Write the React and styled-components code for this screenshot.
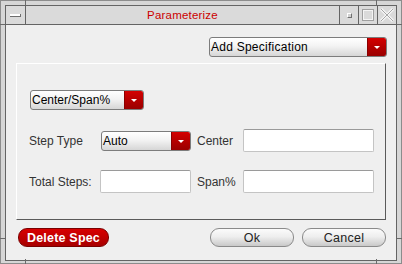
import React from "react";
import styled, { createGlobalStyle } from "styled-components";

const GlobalStyle = createGlobalStyle`
  html, body {
    margin: 0;
    padding: 0;
    background: #d6d6d6;
  }
  body {
    font-family: "Liberation Sans", Arial, sans-serif;
  }
`;

const Frame = styled.div`
  position: relative;
  box-sizing: border-box;
  width: 402px;
  height: 264px;
  border: 1px solid #8c8c8c;
  background: #d6d6d6;
  padding: 4px 4px 2px 4px;
  display: flex;
`;

const Tick = styled.div`
  position: absolute;
  background: #6a6a6a;
  width: ${(p) => (p.$h ? "5px" : "1px")};
  height: ${(p) => (p.$h ? "1px" : "5px")};
`;

const Inner = styled.div`
  flex: 1;
  display: flex;
  flex-direction: column;
  border: 1px solid #646464;
  background: #efefef;
`;

const TitleBar = styled.div`
  display: flex;
  height: 18px;
  border-bottom: 1px solid #646464;
  background: #dadada;
`;

const TitleButton = styled.div`
  display: flex;
  align-items: center;
  justify-content: center;
  border-left: ${(p) => (p.$left ? "none" : "1px solid #646464")};
  border-right: ${(p) => (p.$left ? "1px solid #646464" : "none")};
  width: ${(p) => (p.$left ? "19px" : "18px")};
`;

const MinBar = styled.div`
  width: 10px;
  height: 2px;
  background: #fff;
  border-right: 1px solid #6e6e6e;
  border-bottom: 1px solid #6e6e6e;
  margin-top: 1px;
`;

const Dot = styled.div`
  width: 3px;
  height: 3px;
  background: #d0d0d0;
  border-top: 1px solid #fff;
  border-left: 1px solid #fff;
  border-right: 1px solid #707070;
  border-bottom: 1px solid #707070;
`;

const Title = styled.div`
  flex: 1;
  text-align: center;
  color: #cc0000;
  font-size: 11.5px;
  line-height: 18px;
  letter-spacing: 0.2px;
`;

const Content = styled.div`
  flex: 1;
  display: flex;
  flex-direction: column;
  padding: 12px 9px 0 10px;
`;

const TopRow = styled.div`
  display: flex;
  justify-content: flex-end;
  margin-bottom: 6px;
`;

const Select = styled.div`
  box-sizing: border-box;
  display: flex;
  width: ${(p) => p.$w}px;
  height: 20px;
  border: 1px solid #7c7c7c;
  border-radius: 3px;
  overflow: hidden;
  background: linear-gradient(#ffffff, #f3f3f3 45%, #d6d6d6);
  margin-left: ${(p) => p.$ml || 0}px;
`;

const SelectText = styled.div`
  flex: 1;
  padding-left: 1px;
  font-size: 12px;
  line-height: 18px;
  color: #000;
  letter-spacing: ${(p) => p.$ls || 0}px;
  white-space: nowrap;
`;

const SelectArrow = styled.div`
  width: 18px;
  display: flex;
  align-items: center;
  justify-content: center;
  background: linear-gradient(#d40000, #b00000 60%, #9a0000);
  border-left: 1px solid #8a0000;
`;

const Caret = styled.div`
  width: 0;
  height: 0;
  border-left: 3px solid transparent;
  border-right: 3px solid transparent;
  border-top: 3px solid #fff;
  margin-top: 1px;
`;

const Panel = styled.div`
  box-sizing: border-box;
  margin-right: 1px;
  height: 157px;
  border-top: 1px solid #ffffff;
  border-left: 1px solid #ffffff;
  border-right: 1px solid #5a5a5a;
  border-bottom: 1px solid #5a5a5a;
  padding: 26px 0 0 12px;
`;

const Grid = styled.div`
  display: grid;
  grid-template-columns: 71px 91px 52px 131px;
  grid-template-rows: 23px 23px;
  row-gap: 18px;
  align-items: center;
  margin-top: 19px;
`;

const Label = styled.div`
  font-size: 12px;
  color: #333;
  padding-left: ${(p) => p.$pl || 0}px;
  white-space: nowrap;
`;

const Input = styled.div`
  box-sizing: border-box;
  height: 23px;
  width: ${(p) => p.$w}px;
  background: #fff;
  border: 1px solid #c4c4c4;
  border-top-color: #9a9a9a;
  border-radius: 2px;
`;

const BottomRow = styled.div`
  display: flex;
  align-items: center;
  padding: 8px 0 0 2px;
  gap: 8px;
`;

const Spacer = styled.div`
  flex: 1;
`;

const Button = styled.div`
  box-sizing: border-box;
  width: ${(p) => p.$w}px;
  height: 19px;
  border-radius: 9px;
  display: flex;
  align-items: center;
  justify-content: center;
  font-size: 12.5px;
  color: ${(p) => (p.$danger ? "#fff" : "#222")};
  font-weight: ${(p) => (p.$danger ? "bold" : "normal")};
  border: 1px solid ${(p) => (p.$danger ? "#7a0000" : "#8a8a8a")};
  background: ${(p) =>
    p.$danger
      ? "linear-gradient(#d80000, #c00000 50%, #a80000)"
      : "linear-gradient(#fbfbfb, #eeeeee 45%, #c9c9c9)"};
  letter-spacing: ${(p) => (p.$danger ? "0.2px" : "0.3px")};
`;

const Dropdown = ({ w, text, ml, ls }) => (
  <Select $w={w} $ml={ml}>
    <SelectText $ls={ls}>{text}</SelectText>
    <SelectArrow>
      <Caret />
    </SelectArrow>
  </Select>
);

export default function App() {
  return (
    <>
      <GlobalStyle />
      <Frame>
        <Tick style={{ left: 24, top: -1 }} />
        <Tick style={{ left: 375, top: -1 }} />
        <Tick style={{ left: 24, bottom: -1 }} />
        <Tick style={{ left: 375, bottom: -1 }} />
        <Tick $h style={{ left: -1, top: 23 }} />
        <Tick $h style={{ right: -1, top: 23 }} />
        <Tick $h style={{ left: -1, top: 237 }} />
        <Tick $h style={{ right: -1, top: 237 }} />
        <Inner>
          <TitleBar>
            <TitleButton $left>
              <MinBar />
            </TitleButton>
            <Title>Parameterize</Title>
            <TitleButton>
              <Dot />
            </TitleButton>
            <TitleButton>
              <svg width="14" height="14" viewBox="0 0 14 14">
                <rect x="1.5" y="1.5" width="11" height="11" fill="none" stroke="#a0a0a0" />
                <rect x="2.5" y="2.5" width="9" height="9" fill="none" stroke="#f4f4f4" />
              </svg>
            </TitleButton>
            <TitleButton>
              <svg width="16" height="16" viewBox="0 0 16 16">
                <path d="M2 2 L14 14 M14 2 L2 14" stroke="#f6f6f6" strokeWidth="3" />
                <path d="M2 2 L14 14 M14 2 L2 14" stroke="#a6a6a6" strokeWidth="1" />
              </svg>
            </TitleButton>
          </TitleBar>
          <Content>
            <TopRow>
              <Dropdown w={178} text="Add Specification" ls={0.25} />
            </TopRow>
            <Panel>
              <Dropdown w={114} text="Center/Span%" ml={1} />
              <Grid>
                <Label>Step Type</Label>
                <Dropdown w={90} text="Auto" ml={1} />
                <Label $pl={6}>Center</Label>
                <Input $w={131} />
                <Label>Total Steps:</Label>
                <Input $w={91} />
                <Label $pl={6}>Span%</Label>
                <Input $w={131} />
              </Grid>
            </Panel>
            <BottomRow>
              <Button $danger $w={91}>Delete Spec</Button>
              <Spacer />
              <Button $w={84}>Ok</Button>
              <Button $w={84} style={{ marginRight: 1 }}>Cancel</Button>
            </BottomRow>
          </Content>
        </Inner>
      </Frame>
    </>
  );
}
